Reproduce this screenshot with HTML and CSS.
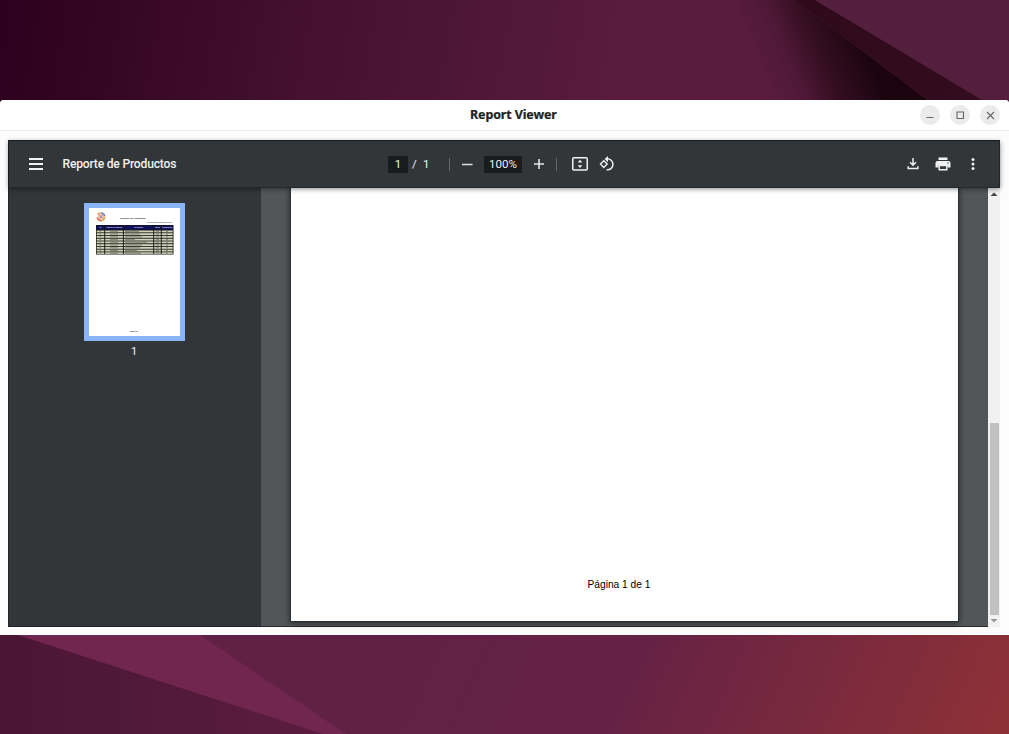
FILE: index.html
```html
<!DOCTYPE html>
<html lang="es">
<head>
<meta charset="utf-8">
<title>Report Viewer</title>
<link rel="stylesheet" href="styles.css">
</head>
<body>
<svg class="wallpaper" viewBox="0 0 1009 734" aria-hidden="true">
  <defs>
    <linearGradient id="top" gradientUnits="userSpaceOnUse" x1="0" y1="0" x2="620" y2="110">
      <stop offset="0" stop-color="#2c001e"/><stop offset=".5" stop-color="#45112f"/><stop offset="1" stop-color="#591c3e"/>
    </linearGradient>
    <linearGradient id="shade" gradientUnits="userSpaceOnUse" x1="770" y1="100" x2="870" y2="58">
      <stop offset="0" stop-color="#1b040e" stop-opacity="0"/><stop offset=".3" stop-color="#1b040e" stop-opacity=".15"/><stop offset=".6" stop-color="#1b040e" stop-opacity=".6"/><stop offset="1" stop-color="#1b040e"/>
    </linearGradient>
    <linearGradient id="bottom" gradientUnits="userSpaceOnUse" x1="480" y1="500" x2="1040" y2="760">
      <stop offset="0" stop-color="#612145"/><stop offset=".35" stop-color="#662244"/><stop offset="1" stop-color="#933335"/>
    </linearGradient>
    <linearGradient id="corner" x1="0" x2="1">
      <stop offset="0" stop-color="#4a1633"/><stop offset="1" stop-color="#5b1d3f"/>
    </linearGradient>
    <linearGradient id="fold" x1="0" x2="1"><stop offset="0" stop-color="#2f0a1b"/><stop offset="1" stop-color="#330d1d"/></linearGradient>
  </defs>
  <rect width="1009" height="110" fill="url(#top)"/>
  <path d="M690 0H795L941 110H690Z" fill="url(#shade)"/>
  <path d="M795 0H815L999 110H941Z" fill="url(#fold)"/>
  <path d="M815 0H1009V110H999Z" fill="#541f3c"/>
  <rect y="620" width="1009" height="114" fill="url(#bottom)"/>
  <path d="M0 620V734H323L18 635Z" fill="url(#corner)"/>
  <path d="M18 635H200L346 734H323Z" fill="#70264e"/>
</svg>

<main class="window">
  <header class="titlebar">
    <h1 class="window-title">Report Viewer</h1>
    <div class="window-controls">
      <span class="control"><svg viewBox="0 0 20 20"><path d="M6.500 12.500h7"/></svg></span>
      <span class="control"><svg viewBox="0 0 20 20"><path d="M7 7h6.500v6.500H7z"/></svg></span>
      <span class="control"><svg viewBox="0 0 20 20"><path d="M7 7l7 7M14 7l-7 7"/></svg></span>
    </div>
  </header>
  <section class="viewer">
    <div class="toolbar">
      <svg class="menu" viewBox="0 0 14 12"><path d="M0 1h14M0 6h14M0 11h14" stroke="#f1f1f1" stroke-width="1.900"/></svg>
      <span class="doc-title">Reporte de Productos</span>
      <div class="center-tools">
        <span class="page-field">1</span><span class="slash">/</span><span class="page-count">1</span>
        <i class="divider"></i>
        <svg class="minus" viewBox="0 0 12 12"><path d="M1 6.500h10.500" stroke="#dedede" stroke-width="1.500"/></svg>
        <span class="zoom-field">100%</span>
        <svg class="plus" viewBox="0 0 12 12"><path d="M1 6h10M6 1v10" stroke="#e6e6e6" stroke-width="1.600"/></svg>
        <i class="divider"></i>
        <svg class="fit" viewBox="0 0 16 14"><rect x=".75" y=".75" width="14.500" height="12.200" rx="1.200" fill="none" stroke="#f1f1f1" stroke-width="1.500"/><path d="M8 2.800l2.300 2.700H5.700zM8 11l2.300-2.700H5.700z" fill="#f1f1f1"/></svg>
        <svg class="rotate" viewBox="0 0 16 16"><path d="M4.800 4.800L8.100 8.100 4.800 11.400 1.500 8.100z" fill="none" stroke="#f1f1f1" stroke-width="1.400"/><path d="M7.800 2.900A5.500 5.500 0 1 1 7.600 13.800" fill="none" stroke="#f1f1f1" stroke-width="1.500"/><path d="M9 0v6.200L5.600 3.100z" fill="#f1f1f1"/></svg>
      </div>
      <div class="actions">
        <svg class="download" viewBox="0 0 12 12"><path d="M6 0v6.500M3 4.200l3 3 3-3M1.200 8.300v2.200h9.600V8.300" fill="none" stroke="#eee" stroke-width="1.500"/></svg>
        <svg class="print" viewBox="0 0 16 14"><path d="M3.500 0.500h9v2.500h-9zM2.500 4h11A2 2 0 0 1 15.500 6v4.500H12.500V8h-9v2.500H.5V6a2 2 0 0 1 2-2z" fill="#f1f1f1"/><path d="M4.200 8.500h7.600v4.200H4.200z" fill="none" stroke="#f1f1f1" stroke-width="1.500"/><circle cx="13" cy="6" r=".7" fill="#323639"/></svg>
        <svg class="more" viewBox="0 0 4 12"><g fill="#f1f1f1"><circle cx="2" cy="1.500" r="1.500"/><circle cx="2" cy="6" r="1.500"/><circle cx="2" cy="10.500" r="1.500"/></g></svg>
      </div>
    </div>
    <div class="content">
      <aside class="sidebar">
        <svg class="thumbnail" viewBox="0 0 91 128">
          <rect width="91" height="128" fill="#fff"/>
          <circle cx="12" cy="9" r="3.400" fill="#e8c9ad"/>
          <g fill="none" stroke-width="1.500">
            <path d="M8.500 6.700a4 4 0 0 1 3-2" stroke="#ef9a50"/><path d="M12 5a4 4 0 0 1 3.800 3" stroke="#7481c8"/>
            <path d="M15.700 8.700a4 4 0 0 1-2.500 3.800" stroke="#e9a33c"/><path d="M12.700 12.800a4 4 0 0 1-4.500-3.500" stroke="#e4604d"/>
            <path d="M10 7.200l4 3M13.500 6.700l-3 4" stroke="#a878a6" stroke-width=".8"/>
          </g>
          <g class="thumb-text">
            <text x="31" y="11" font-size="2.500" font-weight="700" textLength="25.500">Reporte de Productos</text>
            <text x="58" y="15.200" font-size="1.900" textLength="25">24 Septiembre/2022 12:31 PM</text>
            <rect x="7" y="17" width="77.500" height="29.500" fill="#17170f"/>
            <rect x="7.500" y="17.600" width="76.500" height="4" fill="#10105c"/>
            <g fill="#d0d2bd">
              <rect x="7.700" y="22.500" width="76" height="1.900"/><rect x="7.700" y="25.200" width="76" height="1.900"/><rect x="7.700" y="27.900" width="76" height="1.900"/>
              <rect x="7.700" y="30.700" width="76" height="1.900"/><rect x="7.700" y="33.400" width="76" height="1.900"/><rect x="7.700" y="36.200" width="76" height="1.900"/>
              <rect x="7.700" y="38.900" width="76" height="1.900"/><rect x="7.700" y="41.600" width="76" height="1.900"/><rect x="7.700" y="44.300" width="76" height="1.600"/>
            </g>
            <path d="M15.700 17v29M34.400 17v29M64.700 17v29M72.300 17v29" stroke="#11110d" stroke-width=".9"/>
            <g stroke="#45463d" stroke-width=".7" fill="none" opacity=".75">
              <path d="M10.500 23.400h1.500M10.500 26.100h1.500M10.500 28.800h1.500M10.500 31.600h1.500M10.500 34.300h1.500M10.500 37.100h1.500M10.500 39.800h1.500M10.500 42.500h1.500M10.500 45.100h1.500"/>
              <path d="M67 23.400h3M67 26.100h3M67 28.800h3M67 31.600h3M67 34.300h3M67 37.100h3M67 39.800h3M67 42.500h3M67 45.100h3"/>
              <path d="M77 23.400h2M77 26.100h2M77 28.800h2M77 31.600h2M77 34.300h2M77 37.100h2M77 39.800h2M77 42.500h2M77 45.100h2"/>
              <path d="M21 23.400h8M21 26.100h8M21 28.800h8M21 31.600h8M21 34.300h8M21 37.100h8M21 39.800h8M21 42.500h8M21 45.100h8"/>
              <path d="M36 23.400h14M36 26.100h15M36 28.800h17M36 31.600h10M36 34.300h22M36 37.100h17M36 39.800h15M36 42.500h12M36 45.100h16"/>
            </g>
            <g fill="#dadaf0" font-size="2" font-weight="700">
              <text x="10.500" y="20.300">ID</text><text x="17" y="20.300" textLength="16">Código de Barras</text><text x="45" y="20.300" textLength="9">Producto</text><text x="66" y="20.300" textLength="5">Stock</text><text x="73.200" y="20.300" textLength="10">Existencias</text>
            </g>
            <text x="40.600" y="124" font-size="1.900" textLength="8.500">Página 1 de 1</text>
          </g>
        </svg>
        <span class="thumb-number">1</span>
      </aside>
      <div class="document">
        <article class="page"><p class="page-footer">Página 1 de 1</p></article>
      </div>
      <div class="scrollbar">
        <svg class="arrow" viewBox="0 0 12 12"><path d="M6 4.500l3.500 3.500h-7z" fill="#444"/></svg>
        <div class="thumb"></div>
        <svg class="arrow" viewBox="0 0 12 12"><path d="M6 7.500l3.300-3.500H2.700z" fill="#929292"/></svg>
      </div>
    </div>
  </section>
</main>
</body>
</html>
```

FILE: styles.css
```css
* { box-sizing: border-box; }
body { margin: 0; height: 734px; padding-top: 100px; overflow: hidden; background: #45122f; font-family: Roboto, sans-serif; }
svg { display: block; flex: none; }
.wallpaper { position: absolute; inset: 0; z-index: -1; width: 1009px; height: 734px; }
.window { width: 1009px; height: 535px; background: #fcfcfc; border-radius: 4px 4px 0 0; overflow: hidden; }
.titlebar { height: 31px; display: grid; grid-template-columns: 1fr auto 1fr; align-items: center; background: #fff; border-bottom: 1px solid #ebebeb; padding: 0 9px 0 27px; }
.window-title { grid-column: 2; margin: 0; font: 700 12.500px/30px "Noto Sans", sans-serif; color: #222; width: 87px; white-space: nowrap; letter-spacing: -.13px; -webkit-text-stroke: .2px #222; }
.window-controls { display: flex; justify-content: flex-end; gap: 10.200px; }
.control { width: 20px; height: 20px; border-radius: 50%; background: #ebebeb; }
.control svg { width: 20px; height: 20px; fill: none; stroke: #666; stroke-width: 1.100; }
.viewer { width: 992px; height: 487px; margin: 9px 0 0 8px; border: solid #202327; border-width: 1px 0 0 1px; background: #323639; display: flex; flex-direction: column; }
.toolbar { position: relative; z-index: 1; flex: none; height: 47px; display: flex; align-items: center; background: #323639; color: #f1f1f1; border-right: 1px solid #202327; border-bottom: 1px solid #25282b; box-shadow: 0 1px 5px rgba(0,0,0,.45); }
.menu { width: 14px; height: 12px; margin-left: 19.500px; }
.doc-title { width: 325.500px; margin-left: 20px; font-size: 12.100px; font-weight: 500; white-space: nowrap; letter-spacing: -.2px; }
.center-tools { display: flex; align-items: center; font-size: 11.500px; }
.page-field, .zoom-field { display: block; height: 17px; line-height: 17px; background: #191b1c; text-align: center; }
.page-field { width: 20px; }
.slash { margin-left: 4px; width: 4px; }
.page-count { margin-left: 7px; width: 7px; }
.divider { width: 1px; height: 13px; background: #63666a; margin-left: 19px; }
.minus { width: 12px; height: 12px; margin-left: 11px; }
.zoom-field { width: 38px; margin-left: 11px; }
.plus { width: 12px; height: 12px; margin-left: 11px; }
.plus + .divider { margin-left: 11px; }
.fit { width: 16px; height: 14px; margin-left: 15px; }
.rotate { width: 16px; height: 16px; margin-left: 11px; }
.actions { display: flex; align-items: center; margin-left: auto; padding-right: 24px; }
.download { width: 12px; height: 12px; }
.print { width: 16px; height: 14px; margin-left: 16px; }
.more { width: 4px; height: 12px; margin-left: 20px; }
.content { flex: 1; display: flex; min-height: 0; }
.sidebar { width: 252px; display: flex; flex-direction: column; align-items: center; padding: 15px 2px 0 0; border-bottom: 1px solid #202327; background: #323639; }
.thumbnail { width: 101px; height: 138px; border: 5px solid #8ab4f8; }
.thumb-text { font-family: "Liberation Sans", sans-serif; fill: #222; }
.thumb-number { color: #f1f1f1; font-size: 11px; line-height: 13px; margin-top: 4px; }
.document { width: 727px; background: #525659; padding-left: 30px; border-bottom: 1px solid #292c2f; }
.page { width: 667px; height: 433px; display: flex; justify-content: center; align-items: flex-end; background: #fff; box-shadow: 0 0 0 1px #2c2f32, 0 1px 6px 1px rgba(0,0,0,.55); }
.page-footer { margin: 0 11px 29.500px 0; font: 10.200px/15px "Liberation Sans", Arial, sans-serif; color: #000; }
.scrollbar { width: 12px; background: #f1f1f1; display: flex; flex-direction: column; align-items: center; }
.arrow { width: 12px; height: 12px; }
.thumb { width: 9px; height: 192px; margin-top: auto; background: #c1c1c1; }
```
